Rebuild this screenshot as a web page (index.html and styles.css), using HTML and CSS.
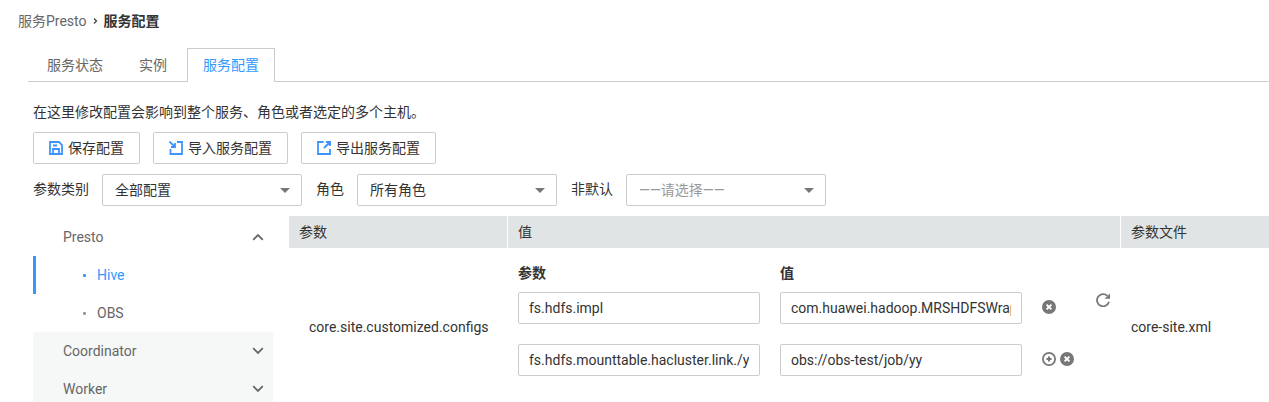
FILE: index.html
```html
<!DOCTYPE html>
<html lang="zh-CN">
<head>
<meta charset="utf-8">
<title>服务配置</title>
<link rel="stylesheet" href="styles.css">
</head>
<body>
<svg class="sprite" aria-hidden="true">
  <symbol id="remove" viewBox="0 0 14 14"><circle cx="7" cy="7" r="7" fill="#777"/><path d="M4.600 4.600l4.800 4.800M9.400 4.600L4.600 9.400" stroke="#fff" stroke-width="2"/></symbol>
  <symbol id="add" viewBox="0 0 14 14"><circle cx="7" cy="7" r="6.100" fill="none" stroke="#777" stroke-width="1.800"/><path d="M7 4.400v5.200M4.400 7h5.200" stroke="#777" stroke-width="2"/></symbol>
  <symbol id="chevron" viewBox="0 0 12 8"><path d="M1.200 1.200L6 6l4.800-4.800" fill="none" stroke="#666" stroke-width="1.800"/></symbol>
</svg>
<nav class="breadcrumb" aria-label="位置">
  <a href="#">服务Presto</a>
  <svg class="crumb-arrow" viewBox="0 0 5 8"><path d="M1 1.500L3.500 4 1 6.500" fill="none" stroke="#444" stroke-width="1.300"/></svg>
  <strong>服务配置</strong>
</nav>
<nav class="tabs" aria-label="服务">
  <a class="tab" href="#">服务状态</a>
  <a class="tab" href="#">实例</a>
  <a class="tab tab-active" href="#" aria-current="page">服务配置</a>
</nav>
<main class="content">
  <p class="hint">在这里修改配置会影响到整个服务、角色或者选定的多个主机。</p>
  <div class="toolbar">
    <button class="button" type="button">
      <svg class="icon" viewBox="0 0 14 14"><path d="M1 1h9l3 3v9H1zM4 12.500V8h6v4.500M4 4.500h4" fill="none" stroke="#3d94ff" stroke-width="1.800"/></svg>
      保存配置
    </button>
    <button class="button" type="button">
      <svg class="icon" viewBox="0 0 14 14"><path d="M8 1h5v12H1.500V8M.5.5l5 5M6 2v4H2" fill="none" stroke="#3d94ff" stroke-width="1.800"/></svg>
      导入服务配置
    </button>
    <button class="button" type="button">
      <svg class="icon" viewBox="0 0 14 14"><path d="M6.500 1H1v12h12V8M7 7l5.500-5.500M9 1h4v4" fill="none" stroke="#3d94ff" stroke-width="1.800"/></svg>
      导出服务配置
    </button>
  </div>
  <form class="filters">
    <div class="filter">
      <label for="category">参数类别</label>
      <div class="select-box"><select id="category"><option>全部配置</option></select></div>
    </div>
    <div class="filter">
      <label for="role">角色</label>
      <div class="select-box"><select id="role"><option>所有角色</option></select></div>
    </div>
    <div class="filter">
      <label for="changed">非默认</label>
      <div class="select-box"><select id="changed" class="unset"><option>——请选择——</option></select></div>
    </div>
  </form>
  <div class="panel">
    <nav class="side" aria-label="角色">
      <button class="side-group open" type="button" aria-expanded="true">Presto<svg class="chevron"><use href="#chevron"/></svg></button>
      <a class="side-item selected" href="#">Hive</a>
      <a class="side-item" href="#">OBS</a>
      <button class="side-group" type="button" aria-expanded="false">Coordinator<svg class="chevron"><use href="#chevron"/></svg></button>
      <button class="side-group" type="button" aria-expanded="false">Worker<svg class="chevron"><use href="#chevron"/></svg></button>
    </nav>
    <table class="params">
      <thead>
        <tr><th class="col-name">参数</th><th class="col-value">值</th><th>参数文件</th></tr>
      </thead>
      <tbody>
        <tr>
          <td class="param-name">core.site.customized.configs</td>
          <td class="param-value">
            <div class="value-layout">
              <table class="pairs">
                <thead>
                  <tr><th id="pair-key">参数</th><th id="pair-value">值</th><td></td></tr>
                </thead>
                <tbody>
                  <tr>
                    <td><input type="text" aria-labelledby="pair-key" value="fs.hdfs.impl"></td>
                    <td><input type="text" aria-labelledby="pair-value" value="com.huawei.hadoop.MRSHDFSWrapper"></td>
                    <td><div class="actions"><button class="icon-button" type="button" aria-label="删除"><svg class="icon"><use href="#remove"/></svg></button></div></td>
                  </tr>
                  <tr>
                    <td><input type="text" aria-labelledby="pair-key" value="fs.hdfs.mounttable.hacluster.link./yy"></td>
                    <td><input type="text" aria-labelledby="pair-value" value="obs://obs-test/job/yy"></td>
                    <td><div class="actions"><button class="icon-button" type="button" aria-label="添加"><svg class="icon"><use href="#add"/></svg></button><button class="icon-button" type="button" aria-label="删除"><svg class="icon"><use href="#remove"/></svg></button></div></td>
                  </tr>
                </tbody>
              </table>
              <button class="icon-button reload" type="button" aria-label="恢复">
                <svg class="icon" viewBox="0 0 14 14"><path d="M11.400 2.800A6.100 6.100 0 1 0 13 8.800" fill="none" stroke="#777" stroke-width="1.800"/><path d="M14 .5v5.300H8.700z" fill="#777"/></svg>
              </button>
            </div>
          </td>
          <td>core-site.xml</td>
        </tr>
      </tbody>
    </table>
  </div>
</main>
</body>
</html>
```
FILE: styles.css
```css
* { box-sizing: border-box; }
html { scrollbar-width: none; }
body {
  margin: 0;
  background: #fff;
  color: #333;
  font: 14px/20px Roboto, "Noto Sans CJK SC", sans-serif;
}
a { color: inherit; text-decoration: none; }
button, input, select { font: inherit; color: inherit; margin: 0; }
.sprite { display: none; }
.icon { display: block; width: 14px; height: 14px; flex: none; }

.breadcrumb {
  display: flex;
  align-items: center;
  gap: 6px;
  padding: 11px 18px 17px;
  color: #666;
}
.breadcrumb strong { color: #333; }
.crumb-arrow { width: 5px; height: 8px; }

.tabs {
  display: flex;
  gap: 4px;
  margin-left: 28px;
  padding-left: 3px;
  border-bottom: 1px solid #ccc;
  color: #666;
}
.tab {
  margin-bottom: -1px;
  padding: 6px 15px;
  border: 1px solid transparent;
  border-bottom: 0;
}
.tab-active {
  padding-bottom: 7px;
  border-color: #ccc;
  background: #fff;
  color: #3399ff;
}

.content { padding: 20px 0 0 33px; }
.hint { margin: 0 0 10px; }
.toolbar { display: flex; gap: 13px; margin-bottom: 10px; }
.button {
  display: flex;
  align-items: center;
  gap: 5px;
  height: 32px;
  padding: 0 15px;
  border: 1px solid #ccc;
  border-radius: 2px;
  background: #fff;
}
.filters { display: flex; gap: 14px; margin-bottom: 10px; }
.filter { display: flex; gap: 13px; }
.filter label { padding-top: 5px; }
.select-box { display: grid; align-items: center; width: 200px; }
.select-box select {
  grid-area: 1 / 1;
  height: 32px;
  padding: 0 30px 0 12px;
  border: 1px solid #ccc;
  border-radius: 2px;
  background: #fff;
  appearance: none;
}
.select-box select.unset { color: #999; }
.select-box::after {
  content: "";
  grid-area: 1 / 1;
  justify-self: end;
  margin-right: 12px;
  border: 5px solid transparent;
  border-top-color: #777;
  border-bottom: 0;
  pointer-events: none;
}

.panel { display: flex; align-items: flex-start; gap: 16px; }
.side { flex: none; width: 240px; margin-top: 2px; color: #666; background: #f6f8f8; }
.side-group, .side-item { display: flex; align-items: center; width: 100%; height: 38px; }
.side-group {
  justify-content: space-between;
  padding: 0 9px 0 30px;
  border: 0;
  background: none;
}
.side-group.open { background: #fff; }
.chevron { width: 12px; height: 8px; }
.open .chevron { transform: rotate(180deg); }
.side-item {
  gap: 11px;
  padding-left: 47px;
  border-left: 3px solid transparent;
  background: #fff;
}
.side-item::before { content: ""; width: 3px; height: 3px; border-radius: 1px; background: #999; }
.side-item.selected { border-left-color: #3399ff; color: #3399ff; }
.side-item.selected::before { background: #3399ff; }

.params { flex: 1; border-collapse: separate; border-spacing: 0; table-layout: fixed; width: 100%; }
.params > thead th {
  height: 32px;
  padding: 0 10px;
  border-right: 1px solid #fff;
  background: #e0e4e4;
  font-weight: 400;
  text-align: left;
}
.params > thead th:last-child { border-right: 0; }
.params .col-name { width: 219px; }
.params .col-value { width: 613px; }
.params > tbody > tr > td { height: 158px; padding: 0 10px; }
.params > tbody > tr > .param-name { padding-left: 20px; }
.params > tbody > tr > .param-value { vertical-align: top; }
.value-layout { display: flex; align-items: flex-start; gap: 22px; padding-top: 15px; }
.pairs { border-collapse: collapse; }
.pairs th { height: 20px; padding: 0; text-align: left; }
.pairs td { padding: 0; }
.pairs tbody td { padding: 9px 20px 11px 0; }
.pairs tbody td:last-child { padding-right: 0; }
.pairs input {
  display: block;
  width: 242px;
  height: 32px;
  padding: 0 10px;
  border: 1px solid #ccc;
  border-radius: 2px;
  background: #fff;
}
.actions { display: flex; gap: 4px; width: 32px; padding-bottom: 2px; }
.icon-button { padding: 0; border: 0; background: none; }
.reload { margin-top: 30px; }
```
